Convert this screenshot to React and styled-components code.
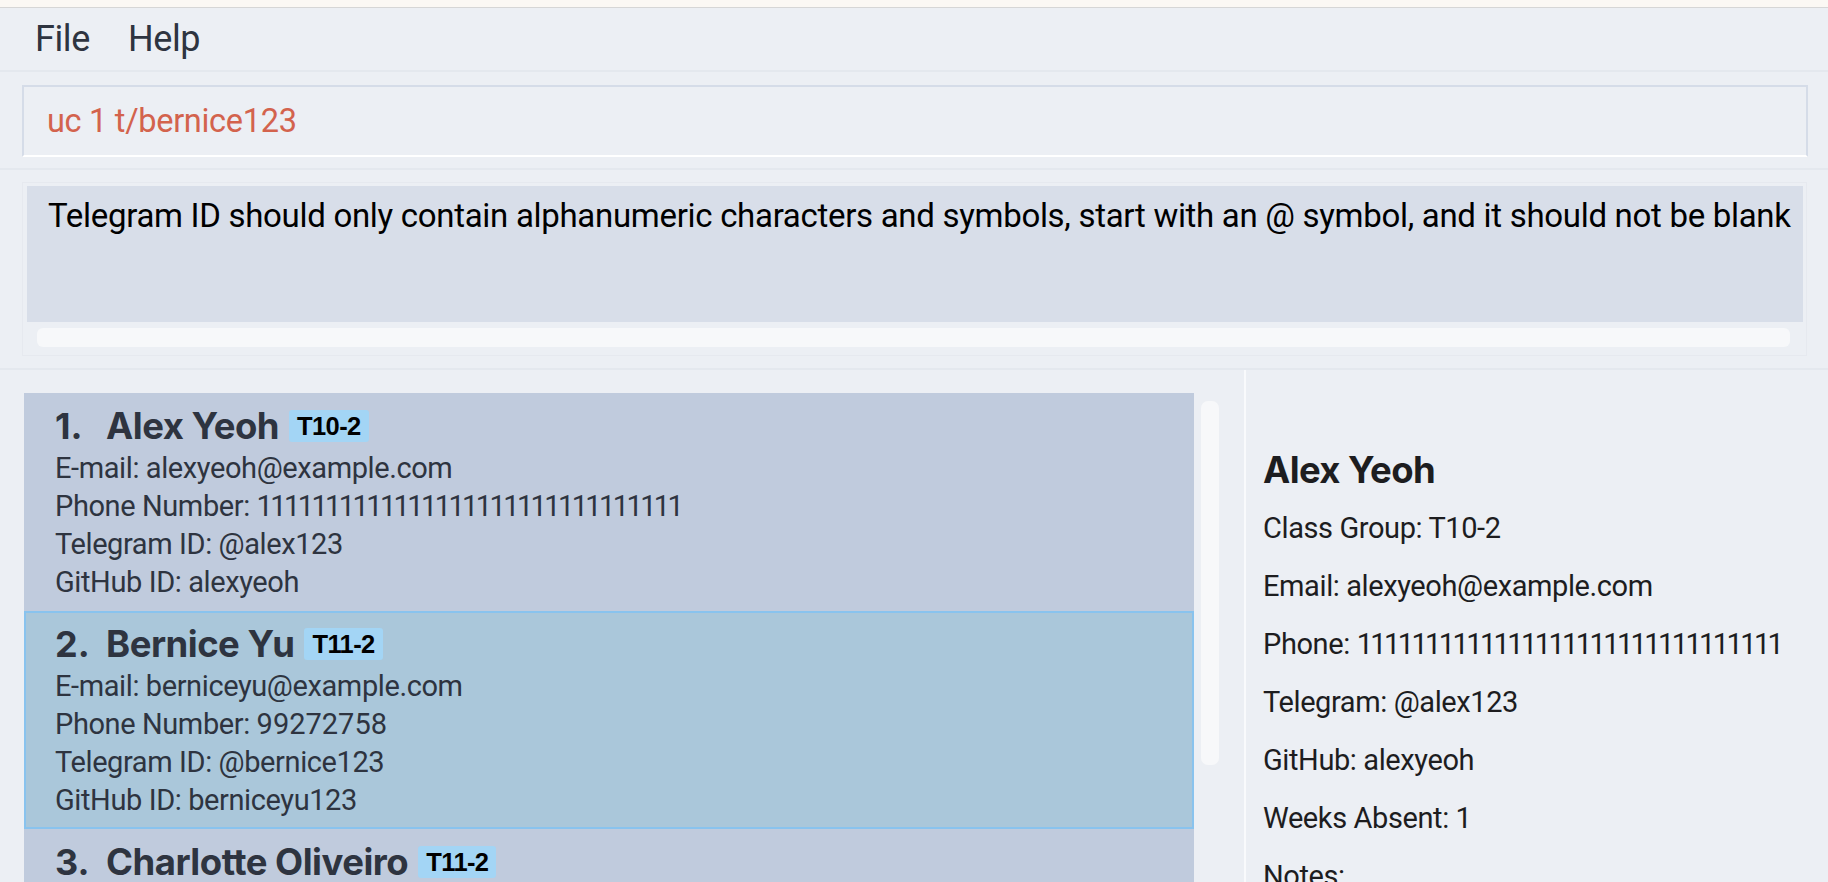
import React from 'react';
import styled, { createGlobalStyle } from 'styled-components';

const GlobalStyle = createGlobalStyle`
	html, body {
		margin: 0;
		padding: 0;
		height: 100%;
		overflow: hidden;
	}
	body {
		background-color: #eceff4;
		font-family: 'Roboto', 'Inter', sans-serif;
		color: #2e3440;
	}
	#root {
		height: 100%;
	}
`;

const Window = styled.div`
	display: flex;
	flex-direction: column;
	width: 100%;
	height: 882px;
	background-color: #eceff4;
`;

const TitleEdge = styled.div`
	height: 7px;
	flex-shrink: 0;
	background-color: #fbf8f4;
	border-bottom: 1px solid #d6d6d6;
`;

const MenuBar = styled.div`
	display: flex;
	align-items: center;
	gap: 38px;
	height: 62px;
	padding-left: 35px;
	flex-shrink: 0;
`;

const MenuItem = styled.span`
	font-size: 36px;
	color: #2e3440;
	letter-spacing: -0.4px;
`;

const CommandPane = styled.div`
	flex-shrink: 0;
	padding: 13px 20px 11px 22px;
	border-top: 2px solid #e4e8ee;
`;

const CommandBox = styled.div`
	height: 68px;
	display: flex;
	align-items: center;
	padding-left: 23px;
	border: 2px solid #d5dce8;
	border-bottom-color: #ffffff;
	font-size: 32.5px;
	color: #d3634d;
	letter-spacing: -0.3px;
`;

const ResultPane = styled.div`
	flex-shrink: 0;
	padding: 12px 21px 12px 22px;
	border-top: 2px solid #e4e8ee;
	border-bottom: 2px solid #e4e8ee;
`;

const ResultFrame = styled.div`
	padding: 3px 3px 8px 4px;
	border: 1px solid #e6e9ef;
`;

const ResultText = styled.div`
	height: 136px;
	box-sizing: border-box;
	padding: 10px 0 0 21px;
	background-color: #d8dee9;
	color: #000000;
	font-size: 33px;
	letter-spacing: -0.3px;
	white-space: nowrap;
	overflow: hidden;
`;

const HScroll = styled.div`
	height: 19px;
	margin: 6px 13px 0 10px;
	border-radius: 6px;
	background-color: #f7f8fa;
`;

const Main = styled.div`
	flex: 1;
	display: flex;
	min-height: 0;
	overflow: hidden;
`;

const ListPane = styled.div`
	width: 1246px;
	flex-shrink: 0;
	display: flex;
	gap: 7px;
	padding: 23px 0 0 24px;
	box-sizing: border-box;
	border-right: 2px solid #f9fafc;
`;

const CardList = styled.div`
	width: 1170px;
	display: flex;
	flex-direction: column;
`;

const Card = styled.div`
	box-sizing: border-box;
	padding: ${({ $selected }) => ($selected ? '10px 0 8px 29px' : '12px 0 10px 31px')};
	background-color: ${({ $selected }) => ($selected ? '#aac7da' : '#c0cbdd')};
	border: ${({ $selected }) => ($selected ? '2px solid #89c3ee' : 'none')};
	flex-shrink: 0;
`;

const NameRow = styled.div`
	display: flex;
	align-items: center;
	height: 42px;
	margin-bottom: 2px;
`;

const Index = styled.span`
	width: 51px;
	font-family: 'Inter', 'Roboto', sans-serif;
	font-weight: 700;
	font-size: 36px;
	color: #2e3440;
`;

const Name = styled.span`
	font-family: 'Inter', 'Roboto', sans-serif;
	font-weight: 700;
	font-size: 36.5px;
	color: #2e3440;
	letter-spacing: -0.5px;
	white-space: nowrap;
`;

const Badge = styled.span`
	margin-left: 10px;
	padding: 2px 8px 1px;
	border-radius: 3px;
	background-color: #a3d5f5;
	color: #000000;
	font-family: 'Liberation Sans', Arial, sans-serif;
	font-weight: 700;
	font-size: 25.5px;
	letter-spacing: -0.6px;
`;

const Field = styled.div`
	height: 38px;
	line-height: 38px;
	font-size: 29px;
	color: #2e3440;
	letter-spacing: -0.4px;
	white-space: nowrap;
`;

const Digits = styled.span`
	letter-spacing: ${({ $tight }) => ($tight ? '-2.6px' : '0px')};
`;

const VScroll = styled.div`
	width: 18px;
	height: 364px;
	margin-top: 8px;
	border-radius: 7px;
	background-color: #f7f8fa;
`;

const DetailPane = styled.div`
	flex: 1;
	display: flex;
	flex-direction: column;
	padding: 71px 0 0 17px;
`;

const DetailName = styled.div`
	font-family: 'Inter', 'Roboto', sans-serif;
	font-weight: 700;
	font-size: 36.5px;
	color: #1d1d1f;
	letter-spacing: -0.6px;
	height: 58px;
	line-height: 58px;
`;

const DetailRow = styled.div`
	font-size: 29px;
	color: #1d1d1f;
	letter-spacing: -0.4px;
	height: 58px;
	line-height: 58px;
	white-space: nowrap;
`;

const persons = [
	{
		name: 'Alex Yeoh',
		group: 'T10-2',
		email: 'alexyeoh@example.com',
		phone: '1111111111111111111111111111111',
		telegram: '@alex123',
		github: 'alexyeoh',
	},
	{
		name: 'Bernice Yu',
		group: 'T11-2',
		email: 'berniceyu@example.com',
		phone: '99272758',
		telegram: '@bernice123',
		github: 'berniceyu123',
	},
	{
		name: 'Charlotte Oliveiro',
		group: 'T11-2',
		email: 'charlotte@example.com',
		phone: '93210283',
		telegram: '@charlotte',
		github: 'charlotte',
	},
];

// the ones in the phone number are much narrower than other digits
const Phone = ({ value }) => <Digits $tight={/^1+$/.test(value)}>{value}</Digits>;

const PersonCard = ({ index, person, selected }) => {
	return (
		<Card $selected={selected}>
			<NameRow>
				<Index>{index}.</Index>
				<Name>{person.name}</Name>
				<Badge>{person.group}</Badge>
			</NameRow>
			<Field>E-mail: {person.email}</Field>
			<Field>
				Phone Number: <Phone value={person.phone} />
			</Field>
			<Field>Telegram ID: {person.telegram}</Field>
			<Field>GitHub ID: {person.github}</Field>
		</Card>
	);
};

const App = () => {
	const shown = persons[0];
	return (
		<Window>
			<GlobalStyle />
			<TitleEdge />
			<MenuBar>
				<MenuItem>File</MenuItem>
				<MenuItem>Help</MenuItem>
			</MenuBar>
			<CommandPane>
				<CommandBox>uc 1 t/bernice123</CommandBox>
			</CommandPane>
			<ResultPane>
				<ResultFrame>
					<ResultText>
						Telegram ID should only contain alphanumeric characters and symbols, start with an @ symbol, and it should not be blank
					</ResultText>
					<HScroll />
				</ResultFrame>
			</ResultPane>
			<Main>
				<ListPane>
					<CardList>
						{persons.map((p, i) => (
							<PersonCard key={p.name} index={i + 1} person={p} selected={i === 1} />
						))}
					</CardList>
					<VScroll />
				</ListPane>
				<DetailPane>
					<DetailName>{shown.name}</DetailName>
					<DetailRow>Class Group: {shown.group}</DetailRow>
					<DetailRow>Email: {shown.email}</DetailRow>
					<DetailRow>
						Phone: <Phone value={shown.phone} />
					</DetailRow>
					<DetailRow>Telegram: {shown.telegram}</DetailRow>
					<DetailRow>GitHub: {shown.github}</DetailRow>
					<DetailRow>Weeks Absent: 1</DetailRow>
					<DetailRow>Notes:</DetailRow>
				</DetailPane>
			</Main>
		</Window>
	);
};

export default App;
